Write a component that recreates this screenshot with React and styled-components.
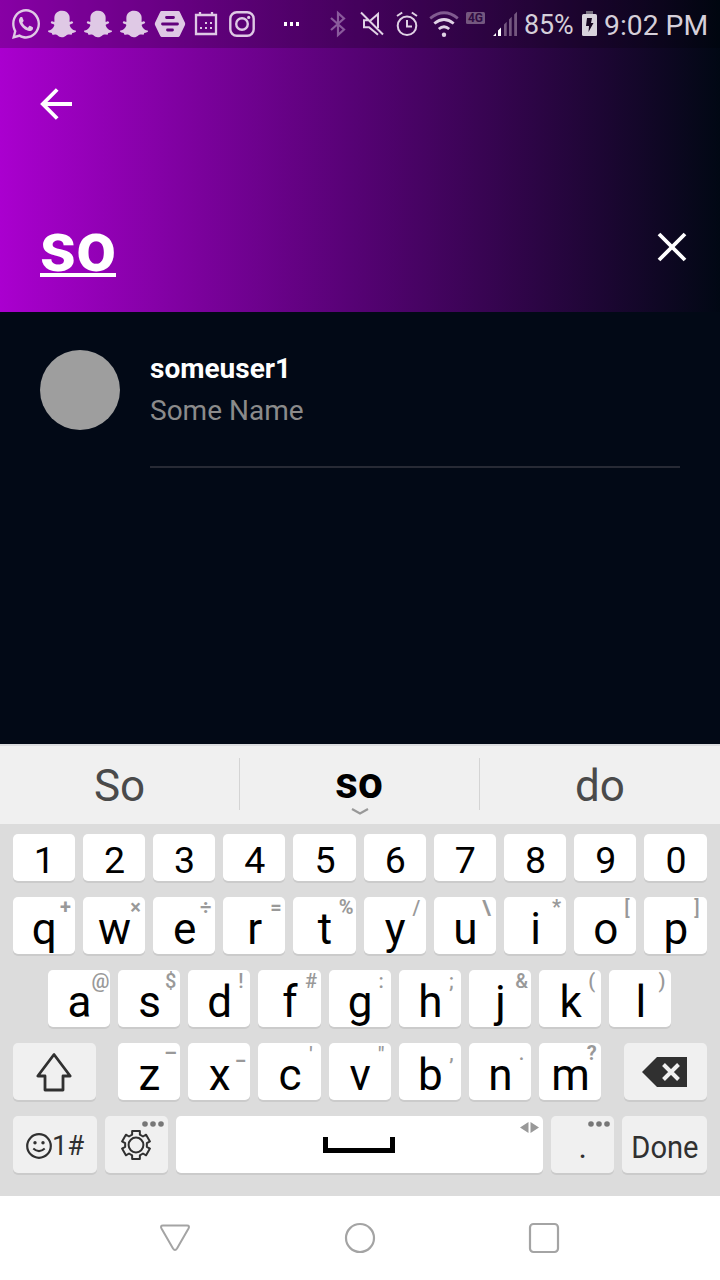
import React from "react";
import styled, { createGlobalStyle, css } from "styled-components";
import { FaWhatsapp, FaSnapchatGhost } from "react-icons/fa";

const GlobalStyle = createGlobalStyle`
  * { box-sizing: border-box; }
  body {
    margin: 0;
    background: #020916;
    font-family: Roboto, "Liberation Sans", sans-serif;
  }
`;

const Screen = styled.div`
  width: 720px;
  height: 1280px;
  display: flex;
  flex-direction: column;
  overflow: hidden;
  background: #020916;
`;

const Top = styled.div`
  height: 312px;
  flex: none;
  display: flex;
  flex-direction: column;
  background: linear-gradient(90deg, #aa00cf 0%, #550273 50%, #010814 100%);
`;

const StatusBar = styled.div`
  height: 48px;
  flex: none;
  display: flex;
  align-items: center;
  padding-left: 12px;
  background: rgba(0, 0, 0, 0.2);
  color: #dfc9e5;
`;

const StatusIcons = styled.div`
  display: flex;
  align-items: center;
  gap: 8px;
`;

const SystemIcons = styled.div`
  display: flex;
  align-items: center;
  margin-left: 25px;
  color: #e0d2e5;
`;

const Glyph = styled.svg.attrs({ fill: "none", xmlns: "http://www.w3.org/2000/svg" })`
  display: block;
  flex: none;
  width: ${(p) => p.$w || 28}px;
  height: ${(p) => p.$h || 28}px;
  margin-left: ${(p) => p.$ml || 0}px;
  overflow: visible;
`;

const WhatsApp = styled(FaWhatsapp)`
  width: 28px;
  height: 30px;
`;

const Ghost = styled(FaSnapchatGhost)`
  width: 28px;
  height: 28px;
`;

const StatusText = styled.span`
  font-size: ${(p) => p.$size}px;
  line-height: ${(p) => p.$line || 50}px;
  height: 48px;
  white-space: nowrap;
  width: ${(p) => p.$w}px;
  margin-left: ${(p) => p.$ml}px;
  color: #d5cfd9;
`;

const Header = styled.header`
  flex: 1;
  display: flex;
  flex-direction: column;
  justify-content: space-between;
  padding: 36px 30px 23px 36px;
`;

const SearchRow = styled.div`
  display: flex;
  align-items: center;
  justify-content: space-between;
  height: 84px;
  padding-left: 4px;
`;

const Query = styled.span`
  margin-top: 6px;
  padding-bottom: 3px;
  font-size: 70.5px;
  line-height: 82px;
  font-weight: 700;
  color: #fff;
  border-bottom: 4px solid #fff;
  height: 54px;
  display: flex;
  align-items: center;
`;

const Results = styled.main`
  flex: 1;
  padding: 38px 40px 0;
`;

const ResultRow = styled.div`
  display: flex;
  gap: 30px;
`;

const Avatar = styled.div`
  width: 80px;
  height: 80px;
  border-radius: 50%;
  background: #9e9e9e;
`;

const ResultBody = styled.div`
  flex: 1;
  height: 118px;
  border-bottom: 2px solid #272a35;
`;

const UserName = styled.div`
  margin-top: 1px;
  font-size: 28px;
  line-height: 36px;
  font-weight: 700;
  color: #fff;
`;

const FullName = styled.div`
  margin-top: 6px;
  font-size: 28px;
  line-height: 36px;
  color: #8b8b8b;
`;

const Suggestions = styled.div`
  height: 80px;
  flex: none;
  display: flex;
  padding-top: 12px;
  border-top: 2px solid #dcdddf;
  background: #f0f0f0;
`;

const Suggestion = styled.div`
  width: 240px;
  height: 52px;
  display: flex;
  flex-direction: column;
  align-items: center;
  border-right: ${(p) => (p.$last ? "0" : "1px solid #d4d4d4")};
  font-size: 44px;
  line-height: 56px;
  color: #4a4a4a;
  ${(p) =>
    p.$active &&
    css`
      padding-right: 1px;
      font-weight: 700;
      line-height: 50px;
      color: #000;
    `}
`;

const Keyboard = styled.div`
  height: 372px;
  flex: none;
  display: flex;
  flex-direction: column;
  gap: 16px;
  padding: 10px 13.4px 0 12.6px;
  background: #dcdcdc;
`;

const KeyRow = styled.div`
  display: flex;
  gap: 8px;
  height: ${(p) => (p.$short ? 47 : 57)}px;
  justify-content: ${(p) => p.$justify || "center"};
`;

const KeyGroup = styled.div`
  display: flex;
  gap: 8px;
`;

const Key = styled.div`
  position: relative;
  flex: none;
  display: flex;
  justify-content: center;
  align-items: center;
  width: ${(p) => p.$w || 62.2}px;
  height: 100%;
  border-radius: 5px;
  background: ${(p) => (p.$soft ? "#f0f0f0" : "#fff")};
  box-shadow: 0 2px 0 #cbcbcb;
  font-size: ${(p) => p.$size || 44}px;
  line-height: 57px;
  padding-top: ${(p) => p.$drop ?? 7}px;
  padding-left: 1px;
  color: ${(p) => (p.$soft ? "#303030" : "#000")};
`;

const NarrowLabel = styled.span`
  transform: scaleX(0.91);
`;

const Hint = styled.span`
  position: absolute;
  top: ${(p) => p.$top ?? 0}px;
  right: 0;
  width: 19px;
  text-align: center;
  font-size: 20px;
  line-height: 22px;
  font-weight: ${(p) => (p.$bold ? 700 : 500)};
  color: #999;
`;

const CornerGlyph = styled(Glyph)`
  position: absolute;
  top: ${(p) => p.$top}px;
  right: ${(p) => p.$right}px;
`;

const NavBar = styled.nav`
  height: 84px;
  flex: none;
  display: flex;
  align-items: center;
  justify-content: space-between;
  padding: 0 160px 0 159px;
  background: #fff;
`;

const DIGITS = "1234567890".split("");
const ROW_Q = [["q", "+"], ["w", "×"], ["e", "÷"], ["r", "="], ["t", "%"], ["y", "/"], ["u", "\\"], ["i", "*"], ["o", "["], ["p", "]"]];
const ROW_A = [["a", "@"], ["s", "$"], ["d", "!"], ["f", "#"], ["g", ":"], ["h", ";"], ["j", "&"], ["k", "("], ["l", ")"]];
const ROW_Z = [["z", "–"], ["x", "_"], ["c", "'"], ["v", '"'], ["b", ","], ["n", "."], ["m", "?"]];
const HINT_TOPS = { _: -1, ",": -1, ".": -1, "–": -1, "?": -1, "*": -1, "+": -1, "×": -1, "÷": -1, "=": -1, "%": -1 };
const BOLD_HINTS = "+×÷=\\–_*%?";

const LetterKey = ({ pair: [letter, hint] }) => (
  <Key>
    {letter}
    <Hint $top={HINT_TOPS[hint]} $bold={BOLD_HINTS.includes(hint)}>{hint}</Hint>
  </Key>
);

const MoreDots = () => (
  <CornerGlyph $w={22} $h={6} $top={5} $right={4} viewBox="0 0 22 6">
    <g fill="#777">
      <circle cx="3" cy="3" r="2.8" />
      <circle cx="11" cy="3" r="2.8" />
      <circle cx="19" cy="3" r="2.8" />
    </g>
  </CornerGlyph>
);

// Six-toothed gear outline centred on (15, 15).
const gearPath = (() => {
  const pts = [];
  for (let i = 0; i < 6; i++) {
    const a = (i * Math.PI) / 3;
    [[-0.36, 11], [-0.27, 14.4], [0.27, 14.4], [0.36, 11]].forEach(([d, r]) => {
      pts.push(`${(15 + r * Math.sin(a + d)).toFixed(2)} ${(15 - r * Math.cos(a + d)).toFixed(2)}`);
    });
  }
  return `M${pts.join("L")}Z`;
})();

export default function App() {
  return (
    <Screen>
      <GlobalStyle />
      <Top>
        <StatusBar>
          <StatusIcons>
            <WhatsApp viewBox="0 32 448 448" preserveAspectRatio="none" />
            <Ghost />
            <Ghost />
            <Ghost />
            <Glyph viewBox="0 0 28 28">
              <path d="M5.5 1h17q.8 0 1.2.7l5.3 11q.4 1.2 0 2.4l-5.3 11q-.4.8-1.2.8h-17q-.8 0-1.2-.8l-5.3-11q-.4-1.2 0-2.4l5.3-11q.4-.7 1.2-.7z" fill="currentColor" />
              <path d="M10.5 7.5h7M6.5 14h15M11.5 20h5" stroke="#62007c" strokeWidth="2.8" strokeLinecap="round" />
            </Glyph>
            <Glyph viewBox="0 0 28 28">
              <path d="M4 5h20v19H4zM8 2v3M20 2v3" stroke="currentColor" strokeWidth="2.3" />
              <path d="M13 12h2v2h-2zM18 12h2v2h-2zM8 17h2v2H8zM13 17h2v2h-2zM18 17h2v2h-2z" fill="currentColor" />
            </Glyph>
            <Glyph viewBox="0 0 28 28">
              <rect x="2.3" y="2.3" width="23.4" height="23.4" rx="6.5" stroke="currentColor" strokeWidth="2.4" />
              <circle cx="14" cy="14" r="5.8" stroke="currentColor" strokeWidth="2.4" />
              <circle cx="20.7" cy="7.4" r="1.6" fill="currentColor" />
            </Glyph>
            <Glyph $w={16} $h={4} $ml={20} viewBox="0 0 16 4">
              <path d="M0 0h3v4H0zM6 0h3v4H6zM12 0h3v4h-3z" fill="#fff" />
            </Glyph>
          </StatusIcons>
          <SystemIcons>
            <Glyph $w={28} $ml={-1} viewBox="0 0 28 28">
              <path d="M7 8l13 11.5-6 5.5V3l6 5.5L7 20" stroke="#8a5a9c" strokeWidth="2.2" />
            </Glyph>
            <Glyph $w={28} $ml={8} viewBox="0 0 28 28">
              <path d="M9 10.2H4v7h5l9 7.5M10.5 10.5L18 4v14M1 2.5l22 22" stroke="currentColor" strokeWidth="2" />
            </Glyph>
            <Glyph $w={28} $ml={8} viewBox="0 0 28 28">
              <circle cx="11" cy="15.8" r="9.3" stroke="currentColor" strokeWidth="2" />
              <path d="M11 10v6.5h5M1 6l5.2-3.5M21 6l-5.2-3.5" stroke="currentColor" strokeWidth="2" />
            </Glyph>
            <Glyph $w={30} $ml={5} viewBox="0 0 30 28">
              <path d="M1.2 8.3q14-11 27.6 0" stroke="#815b90" strokeWidth="2.8" />
              <path d="M5.3 13.5q9.7-8 19.4 0M9.8 19q5.2-4.5 10.4 0" stroke="currentColor" strokeWidth="2.8" />
              <circle cx="15" cy="24.8" r="2.2" fill="currentColor" />
            </Glyph>
            <Glyph $w={19} $ml={7} viewBox="0 0 19 28">
              <rect y="2" width="19" height="12" rx="1.5" fill="#74577f" />
              <text x="9.5" y="12.3" textAnchor="middle" fontSize="12" fontWeight="700" fill="#2f0a42">4G</text>
            </Glyph>
            <Glyph $w={24} $ml={8} viewBox="0 0 24 28">
              <path d="M0 26l3-3v3zM5 26v-5.5l3-3V26z" fill="#fff" />
              <path d="M11 26V14.5l2.7-2.7V26zM16 26V9.5l2.7-2.7V26zM21.2 26V4.5L24 1.8V26z" fill="#74577f" />
            </Glyph>
            <StatusText $size={26.8} $w={58} $ml={7}>85%</StatusText>
            <Glyph $w={15} viewBox="0 0 15 28">
              <path d="M4 1h7v3H4z" fill="#777080" />
              <rect y="4" width="15" height="22" rx="1.5" fill="#d8d3dc" />
              <path d="M5 8h5L9 13h2.5L6.5 22l.5-6H4z" fill="#160620" />
            </Glyph>
            <StatusText $size={28.3} $line={51} $w={106} $ml={7}>9:02 PM</StatusText>
          </SystemIcons>
        </StatusBar>
        <Header>
          <Glyph $w={40} $h={40} viewBox="0 0 40 40">
            <path d="M36 20H8M21.2 5.5L6.8 20l14.4 14.5" stroke="#fff" strokeWidth="3.8" />
          </Glyph>
          <SearchRow>
            <Query>so</Query>
            <Glyph $w={36} $h={36} viewBox="0 0 36 36">
              <path d="M5 5l26 26M31 5L5 31" stroke="#fff" strokeWidth="3.8" />
            </Glyph>
          </SearchRow>
        </Header>
      </Top>
      <Results>
        <ResultRow>
          <Avatar />
          <ResultBody>
            <UserName>someuser1</UserName>
            <FullName>Some Name</FullName>
          </ResultBody>
        </ResultRow>
      </Results>
      <Suggestions>
        <Suggestion>So</Suggestion>
        <Suggestion $active>
          so
          <Glyph $w={16} $h={7} $ml={1} viewBox="0 0 16 7">
            <path d="M0 1l8 4.5L16 1" stroke="#999" strokeWidth="2.2" />
          </Glyph>
        </Suggestion>
        <Suggestion $last>do</Suggestion>
      </Suggestions>
      <Keyboard>
        <KeyRow $short>
          {DIGITS.map((d) => <Key key={d} $size={37.5} $drop={5}>{d}</Key>)}
        </KeyRow>
        <KeyRow>{ROW_Q.map((p) => <LetterKey key={p[0]} pair={p} />)}</KeyRow>
        <KeyRow>{ROW_A.map((p) => <LetterKey key={p[0]} pair={p} />)}</KeyRow>
        <KeyRow $justify="space-between">
          <Key $soft $w={83} $drop={0}>
            <Glyph $w={36} $h={40} $ml={-1} viewBox="0 0 36 40">
              <path d="M18 2.5L1.8 24H9v14h18V24h7.2z" stroke="#303030" strokeWidth="2.8" strokeLinejoin="round" />
            </Glyph>
          </Key>
          <KeyGroup>{ROW_Z.map((p) => <LetterKey key={p[0]} pair={p} />)}</KeyGroup>
          <Key $soft $w={83} $drop={0}>
            <Glyph $w={45} $h={30} $ml={-2} viewBox="0 0 45 30">
              <path d="M0 15L15 0h30v30H15z" fill="#303030" />
              <path d="M21.5 7.5l15 15M36.5 7.5l-15 15" stroke="#f0f0f0" strokeWidth="4" />
            </Glyph>
          </Key>
        </KeyRow>
        <KeyRow>
          <Key $soft $w={84} $size={27.5} $drop={2}>
            <Glyph $w={26} $h={26} viewBox="0 0 26 26">
              <circle cx="13" cy="13" r="11.8" stroke="#303030" strokeWidth="2.2" />
              <circle cx="9" cy="9.8" r="1.7" fill="#303030" />
              <circle cx="17" cy="9.8" r="1.7" fill="#303030" />
              <path d="M7.3 15.5q5.7 5.2 11.4 0" stroke="#303030" strokeWidth="2" />
            </Glyph>
            1#
          </Key>
          <Key $soft $w={63} $drop={1}>
            <Glyph $w={30} $h={30} $ml={-2} viewBox="0 0 30 30">
              <path d={gearPath} stroke="#303030" strokeWidth="2" strokeLinejoin="round" />
              <circle cx="15" cy="15" r="7.4" stroke="#303030" strokeWidth="2" />
            </Glyph>
            <MoreDots />
          </Key>
          <Key $w={367} $drop={0}>
            <Glyph $w={72} $h={16} $ml={-2} viewBox="0 0 72 16">
              <path d="M2.5 0v13.5h67V0" stroke="#000" strokeWidth="5" />
            </Glyph>
            <CornerGlyph $w={19} $h={11} $top={6} $right={4} viewBox="0 0 19 11">
              <path d="M8.5 0v11L0 5.5zM10.5 0v11L19 5.5z" fill="#999" />
            </CornerGlyph>
          </Key>
          <Key $soft $w={63} $size={32} $drop={6}>
            .
            <MoreDots />
          </Key>
          <Key $soft $w={85} $size={32} $drop={6}>
            <NarrowLabel>Done</NarrowLabel>
          </Key>
        </KeyRow>
      </Keyboard>
      <NavBar>
        <Glyph $w={32} $h={32} viewBox="0 0 32 32">
          <path d="M4 3.5h24q3 0 1.5 3L18 26.5q-2 3-4 0L2.5 6.5q-1.5-3 1.5-3z" stroke="#a4a4a4" strokeWidth="2" />
        </Glyph>
        <Glyph $w={32} $h={32} viewBox="0 0 32 32">
          <circle cx="16" cy="16" r="14" stroke="#a4a4a4" strokeWidth="2.2" />
        </Glyph>
        <Glyph $w={32} $h={32} viewBox="0 0 32 32">
          <rect x="2" y="2" width="28" height="28" rx="3.5" stroke="#a4a4a4" strokeWidth="2.2" />
        </Glyph>
      </NavBar>
    </Screen>
  );
}
